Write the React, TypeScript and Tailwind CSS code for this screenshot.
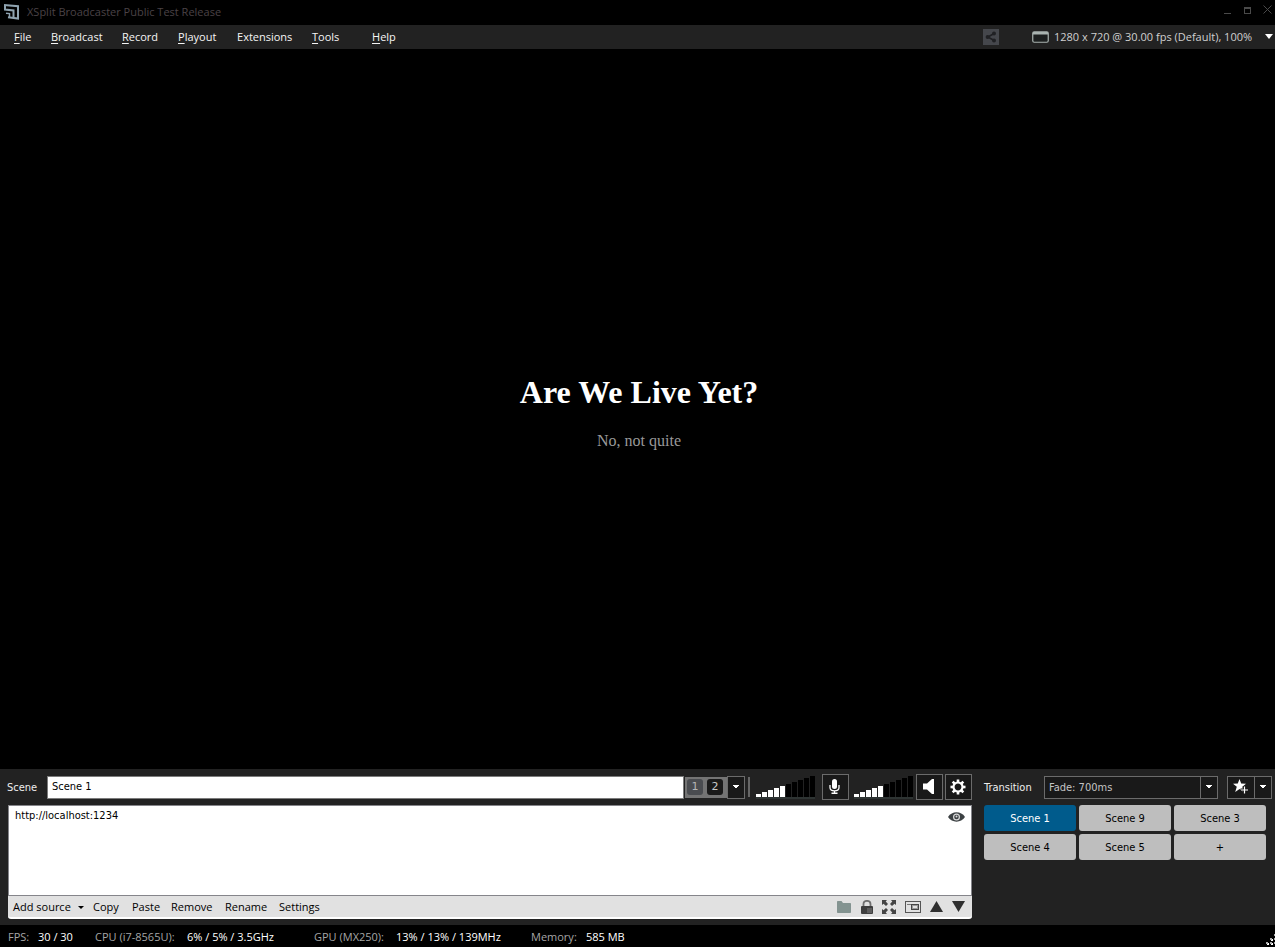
import { useState } from "react";
import type { ReactNode } from "react";

const menus = [
  { label: "File", mnemonic: true, width: "w-[37px]" },
  { label: "Broadcast", mnemonic: true, width: "w-[71px]" },
  { label: "Record", mnemonic: true, width: "w-[56px]" },
  { label: "Playout", mnemonic: true, width: "w-[59px]" },
  { label: "Extensions", mnemonic: false, width: "w-[75px]" },
  { label: "Tools", mnemonic: true, width: "w-[60px]" },
  { label: "Help", mnemonic: true, width: "w-[37px]" },
];

const stats = [
  { label: "FPS:", value: "30 / 30", labelWidth: "w-[30px]", valueWidth: "w-[57px]" },
  { label: "CPU (i7-8565U):", value: "6% / 5% / 3.5GHz", labelWidth: "w-[92px]", valueWidth: "w-[127px]" },
  { label: "GPU (MX250):", value: "13% / 13% / 139MHz", labelWidth: "w-[82px]", valueWidth: "w-[135px]" },
  { label: "Memory:", value: "585 MB", labelWidth: "w-[55px]", valueWidth: "w-[50px]" },
];

const editActions = [
  { label: "Copy", width: "w-[39px]" },
  { label: "Paste", width: "w-[39px]" },
  { label: "Remove", width: "w-[54px]" },
  { label: "Rename", width: "w-[54px]" },
  { label: "Settings", width: "w-[54px]" },
];

const scenes = ["Scene 1", "Scene 9", "Scene 3", "Scene 4", "Scene 5"];

function CaretDown() {
  return (
    <svg width="6" height="4" viewBox="0 0 6 4" shapeRendering="crispEdges" aria-hidden="true">
      <path d="M0 0H6V1H5V2H4V3H2V2H1V1H0Z" fill="#fff" />
    </svg>
  );
}

function LevelMeter({ label }: { label: string }) {
  const bars = Array.from({ length: 10 }, (_, i) => i);
  return (
    <svg role="img" aria-label={label} className="shrink-0" width="59" height="23" viewBox="0 0 59 23" shapeRendering="crispEdges">
      <rect x="0" y="21" width="59" height="2" fill="#2e3433" />
      {bars.map((i) => (
        <rect key={i} x={i * 6} y={18 - i * 2} width="5" height={3 + i * 2} fill={i < 5 ? "#fff" : "#000"} />
      ))}
    </svg>
  );
}

function SquareButton({ label, children }: { label: string; children: ReactNode }) {
  return (
    <button aria-label={label} className="flex h-[26px] w-[27px] shrink-0 items-center justify-center border border-[#6b6b6b] bg-[#191919] pr-0.5 pb-px">
      {children}
    </button>
  );
}

function TitleBar() {
  return (
    <header className="flex h-[25px] items-center bg-black pr-[3px] pl-1">
      <svg width="16" height="18" viewBox="0 0 16 18" fill="none" stroke="#8fa3b0" strokeWidth="2" aria-hidden="true">
        <path d="M0 1L14 2.200V14.500L4 13.200" />
        <path d="M1 1V5.500L9.500 6.500V13.500" />
        <path d="M2 9.200L5.500 9.600V13.200" strokeWidth="1.500" />
      </svg>
      <h1 className="ml-[7px] flex-1 text-[11px] text-[#4a4246]">XSplit Broadcaster Public Test Release</h1>
      <div className="flex items-center gap-[13px] pb-1.5 text-[#4a4a4a]">
        <button aria-label="Minimize">
          <svg width="7" height="8" viewBox="0 0 7 8" className="block" aria-hidden="true">
            <path d="M0 7.500H7" stroke="currentColor" strokeWidth="1" />
          </svg>
        </button>
        <button aria-label="Maximize">
          <svg width="7" height="8" viewBox="0 0 7 8" className="block" aria-hidden="true" shapeRendering="crispEdges">
            <path d="M0 1H7V8H0ZM1 3V7H6V3Z" fill="currentColor" fillRule="evenodd" />
          </svg>
        </button>
        <button aria-label="Close" className="-ml-px">
          <svg width="9" height="9" viewBox="0 0 9 9" className="block" aria-hidden="true">
            <path d="M.5 .5L8.500 8.500M8.500 .5L.5 8.500" stroke="currentColor" />
          </svg>
        </button>
      </div>
    </header>
  );
}

function MenuBar() {
  return (
    <nav className="flex h-6 items-center bg-[#222] pr-0.5 pl-3.5 text-[11px] text-[#f5f5f5]">
      {menus.map((menu) => (
        <button key={menu.label} className={`${menu.width} shrink-0 text-left whitespace-nowrap`}>
          {menu.mnemonic ? <span className="underline underline-offset-2">{menu.label[0]}</span> : menu.label[0]}
          {menu.label.slice(1)}
        </button>
      ))}
      <button aria-label="Share" className="ml-auto flex size-4 items-center justify-center bg-[#45474c]">
        <svg width="12" height="12" viewBox="0 0 12 12" aria-hidden="true">
          <path d="M9 2.500L3 6L9 9.500" stroke="#202124" strokeWidth="1.600" fill="none" />
          <circle cx="9" cy="2.600" r="2" fill="#202124" />
          <circle cx="2.600" cy="6" r="2" fill="#202124" />
          <circle cx="9" cy="9.400" r="2" fill="#202124" />
        </svg>
      </button>
      <button className="ml-[33px] flex w-[241px] items-center text-[#d0d0d0]">
        <svg width="17" height="12" viewBox="0 0 17 12" aria-hidden="true">
          <rect x=".75" y=".75" width="15.500" height="10.500" rx="1.500" fill="#1c1f1f" stroke="#a9b3b0" strokeWidth="1.200" />
          <path d="M1 1H16V3.500H1Z" fill="#a9b3b0" />
        </svg>
        <span className="ml-[5px] flex-1 text-left whitespace-nowrap">1280 x 720 @ 30.00 fps (Default), 100%</span>
        <svg width="8" height="5" viewBox="0 0 8 5" className="mb-0.5" aria-hidden="true">
          <path d="M0 0H8L4 5Z" fill="#fff" />
        </svg>
      </button>
    </nav>
  );
}

function Preview() {
  return (
    <main className="flex flex-1 flex-col items-center justify-center bg-black pt-[7px] pb-0.5 pl-[3px] font-['Liberation_Serif',serif]">
      <h2 className="text-[32px] leading-9 font-bold text-white">Are We Live Yet?</h2>
      <p className="mt-[22px] text-base leading-[18px] text-[#999]">No, not quite</p>
    </main>
  );
}

function SceneRow() {
  const [name, setName] = useState("Scene 1");
  const numberClass = "flex size-4 items-center justify-center rounded-[3px] font-['DejaVu_Sans',sans-serif] text-[11px] pt-px";
  return (
    <div className="flex h-[26px] items-center">
      <label htmlFor="scene-name" className="w-10 shrink-0 pt-0.5 text-[#eee]">Scene</label>
      <input
        id="scene-name"
        value={name}
        onChange={(e) => setName(e.target.value)}
        className="h-[23px] min-w-0 flex-1 border border-[#7b7b7b] bg-white px-1 pb-0.5 text-black outline-none"
      />
      <div className="ml-px flex h-[21px] w-[42px] shrink-0 items-center gap-1 bg-[#747474] pl-0.5">
        <button className={`${numberClass} bg-[#4a4c50] text-[#b5b5b5]`}>1</button>
        <button className={`${numberClass} bg-[#1a1a1a] text-[#c9c9c9]`}>2</button>
      </div>
      <button aria-label="More scene layouts" className="flex h-[23px] w-[18px] shrink-0 items-center justify-center border border-[#6b6b6b] bg-[#191919]">
        <CaretDown />
      </button>
      <div className="mr-1.5 ml-[3px] h-5 w-0.5 bg-[#666]" />
      <LevelMeter label="Microphone level" />
      <div className="ml-[7px] flex">
        <SquareButton label="Microphone">
          <svg width="11" height="15" viewBox="0 0 11 15" fill="none" aria-hidden="true">
            <rect x="3" y="0" width="5" height="10" rx="2.500" fill="#fff" />
            <path d="M1 6V8.500C1 13 10 13 10 8.500V6M5.500 11.500V14M2.500 14.250H8.500" stroke="#fff" strokeWidth="1.300" />
          </svg>
        </SquareButton>
      </div>
      <div className="ml-[5px] flex">
        <LevelMeter label="Speaker level" />
      </div>
      <div className="ml-[3px] flex gap-0.5">
        <SquareButton label="Speaker">
          <svg width="13" height="15" viewBox="0 0 13 15" aria-hidden="true">
            <path d="M1 4.500H5L10 0H12V15H10L5 10.500H1Z" fill="#fff" />
          </svg>
        </SquareButton>
        <SquareButton label="Audio settings">
          <svg width="16" height="16" viewBox="-8 -8 16 16" aria-hidden="true">
            <circle r="4.500" fill="none" stroke="#fff" strokeWidth="2.200" />
            {[0, 45, 90, 135, 180, 225, 270, 315].map((angle) => (
              <rect key={angle} x="-1.300" y="-7.500" width="2.600" height="3" fill="#fff" transform={`rotate(${angle})`} />
            ))}
          </svg>
        </SquareButton>
      </div>
    </div>
  );
}

function SourceList() {
  return (
    <div className="mt-[5px] ml-px">
      <ul className="h-[91px] border border-[#85858a] bg-white">
        <li className="flex h-[21px] items-center justify-between pr-1.5 pl-1.5 text-black">
          <span>http://localhost:1234</span>
          <button aria-label="Toggle source visibility">
            <svg width="17" height="10" viewBox="0 0 17 10" className="block" aria-hidden="true">
              <path d="M0 5C4-1.200 13-1.200 17 5C13 11.200 4 11.200 0 5Z" fill="#3c4143" />
              <circle cx="8.500" cy="5" r="3.500" fill="#d8d8d8" />
              <circle cx="8.500" cy="5" r="2.300" fill="#3c4143" />
              <circle cx="8.500" cy="4.500" r="1" fill="#ddd" />
            </svg>
          </button>
        </li>
      </ul>
      <div className="flex h-[23px] items-center rounded-b-[3px] border-b-2 border-white bg-[#e1e1e1] pt-0.5 pr-[7px] pl-[5px] font-['Open_Sans',sans-serif] text-[11px] text-black">
        <button className="flex w-20 shrink-0 items-center text-left whitespace-nowrap">
          <span className="w-[65px]">Add source</span>
          <svg width="6" height="3" viewBox="0 0 6 3" aria-hidden="true">
            <path d="M0 0H6L3 3Z" fill="#000" />
          </svg>
        </button>
        {editActions.map((action) => (
          <button key={action.label} className={`${action.width} shrink-0 text-left`}>{action.label}</button>
        ))}
        <div className="ml-auto flex items-center gap-[9px] pb-0.5">
          <button aria-label="Group sources">
            <svg width="14" height="12" viewBox="0 0 14 12" className="block" aria-hidden="true">
              <path d="M0 1C0 .4 .4 0 1 0H4.500L6 2H13C13.600 2 14 2.400 14 3V11C14 11.600 13.600 12 13 12H1C.4 12 0 11.600 0 11Z" fill="#839390" />
            </svg>
          </button>
          <button aria-label="Lock source">
            <svg width="13" height="14" viewBox="-1 0 13 14" className="block" aria-hidden="true">
              <path d="M2.500 7V4C2.500-.2 9.500-.2 9.500 4V7" fill="none" stroke="#707070" strokeWidth="1.800" />
              <rect x="0" y="6" width="12" height="8" rx="1" fill="#3e3e3e" />
              <rect x="6" y="8" width="5" height="5" fill="#5d5d5d" />
            </svg>
          </button>
          <button aria-label="Fit to stage">
            <svg width="14" height="14" viewBox="0 0 14 14" className="block" aria-hidden="true">
              <path d="M0 0H5L3.700 1.500L6 4L4 6L1.500 3.700L0 5ZM14 0V5L12.500 3.700L10 6L8 4L10.300 1.500L9 0ZM0 14V9L1.500 10.300L4 8L6 10L3.700 12.500L5 14ZM14 14H9L10.300 12.500L8 10L10 8L12.500 10.300L14 9Z" fill="#444" />
            </svg>
          </button>
          <button aria-label="Source position">
            <svg width="16" height="12" viewBox="0 0 16 12" className="block" fill="none" aria-hidden="true" shapeRendering="crispEdges">
              <rect x=".5" y=".5" width="15" height="11" stroke="#555" />
              <path d="M2 3.500H6" stroke="#777" />
              <rect x="6.500" y="3.500" width="7" height="5" stroke="#444" />
              <rect x="7.500" y="4.500" width="5" height="3" stroke="#999" />
            </svg>
          </button>
          <button aria-label="Move up">
            <svg width="13" height="11" viewBox="0 0 13 11" className="block" aria-hidden="true">
              <path d="M6.500 0L13 11H0Z" fill="#2f2f2f" />
            </svg>
          </button>
          <button aria-label="Move down">
            <svg width="13" height="11" viewBox="0 0 13 11" className="block" aria-hidden="true">
              <path d="M6.500 11L13 0H0Z" fill="#2f2f2f" />
            </svg>
          </button>
        </div>
      </div>
    </div>
  );
}

function TransitionPanel() {
  const [active, setActive] = useState("Scene 1");
  const tile = "h-[26px] rounded-[3px] pt-0.5";
  return (
    <section className="w-[288px] shrink-0">
      <div className="flex h-[26px] items-center">
        <label htmlFor="transition" className="w-[60px] pt-0.5 text-[#eee]">Transition</label>
        <div className="relative h-[23px] w-[174px]">
          <select id="transition" className="h-full w-full appearance-none border border-[#6b6b6b] bg-[#191919] px-1 pt-0.5 text-[#c4c4c4] outline-none">
            <option>Fade: 700ms</option>
          </select>
          <span className="pointer-events-none absolute inset-y-0 right-0 flex w-[18px] items-center justify-center border border-[#6b6b6b]">
            <CaretDown />
          </span>
        </div>
        <button aria-label="Add favorite transition" className="ml-[9px] flex h-[23px] w-7 items-center justify-center border border-[#6b6b6b] bg-[#191919]">
          <svg width="16" height="16" viewBox="0 0 16 16" aria-hidden="true">
            <path d="M6.500 0L8.200 4.600L13 4.800L9.300 7.800L10.500 13L6.500 10L2.200 13L3.800 7.800L0 4.800L4.800 4.600Z" fill="#fff" />
            <path d="M11.500 7V15M7.500 11H15.500" stroke="#191919" strokeWidth="3" />
            <path d="M11.500 7.500V14.500M8 11H15" stroke="#fff" strokeWidth="1.200" />
          </svg>
        </button>
        <button aria-label="Favorite transitions" className="-ml-px flex h-[23px] w-[18px] items-center justify-center border border-[#6b6b6b] bg-[#191919]">
          <CaretDown />
        </button>
      </div>
      <div className="mt-[5px] mr-1.5 grid grid-cols-3 gap-[3px]">
        {scenes.map((scene) => (
          <button
            key={scene}
            onClick={() => setActive(scene)}
            className={`${tile} ${scene === active ? "bg-[#005b8c] text-white" : "bg-[#bebebe] text-black"}`}
          >
            {scene}
          </button>
        ))}
        <button aria-label="Add scene" className={`${tile} bg-[#bebebe] text-black`}>+</button>
      </div>
    </section>
  );
}

function StatusBar() {
  return (
    <footer className="flex h-[22px] items-center bg-black pl-2 text-[11px] whitespace-nowrap">
      {stats.map((stat) => (
        <div key={stat.label} className="flex pt-0.5">
          <span className={`${stat.labelWidth} text-[#a6a6a6]`}>{stat.label}</span>
          <span className={`${stat.valueWidth} text-white`}>{stat.value}</span>
        </div>
      ))}
      <svg className="mb-0.5 ml-auto self-end" width="9" height="11" viewBox="0 0 9 11" shapeRendering="crispEdges" aria-hidden="true">
        {[[8, 0], [4, 4], [8, 4], [0, 8], [4, 8], [8, 8]].map(([x, y]) => (
          <g key={`${x}-${y}`}>
            <rect x={x + 1} y={y + 1} width="2" height="2" fill="#fff" />
            <rect x={x} y={y} width="2" height="2" fill="#aaa" />
          </g>
        ))}
      </svg>
    </footer>
  );
}

export default function App() {
  return (
    <div className="flex min-h-screen flex-col bg-black font-['Open_Sans',sans-serif]">
      <TitleBar />
      <MenuBar />
      <Preview />
      <div className="flex h-[156px] gap-3 bg-[#222] pt-[5px] pr-[3px] pl-[7px] font-['DejaVu_Sans_Condensed','Noto_Sans',sans-serif] text-[11px]">
        <section className="min-w-0 flex-1">
          <SceneRow />
          <SourceList />
        </section>
        <TransitionPanel />
      </div>
      <StatusBar />
    </div>
  );
}
